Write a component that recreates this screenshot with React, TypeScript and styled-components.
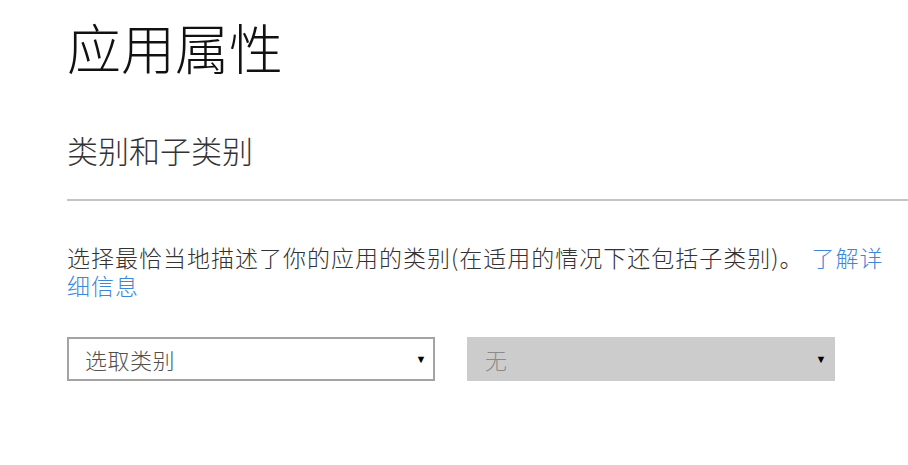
import React from 'react';
import styled, { createGlobalStyle } from 'styled-components';

const GlobalStyle = createGlobalStyle`
  html, body {
    margin: 0;
    padding: 0;
    background: #ffffff;
    overflow: hidden;
  }
  body {
    font-family: "Noto Sans CJK SC", "Liberation Sans", sans-serif;
    color: #333333;
  }
`;

const Page = styled.main`
  padding: 15px 0 0 67px;
  width: 841px;
`;

const Title = styled.h1`
  margin: 0;
  font-size: 54px;
  font-weight: 300;
  line-height: 64px;
  color: #111111;
`;

const SectionTitle = styled.h2`
  margin: 51px 0 0;
  font-size: 31px;
  font-weight: 300;
  line-height: 40px;
  color: #333333;
  padding-bottom: 29px;
  border-bottom: 2px solid #c4c4c4;
`;

const Description = styled.p`
  margin: 42px 0 0;
  width: 826px;
  font-size: 23px;
  letter-spacing: 1px;
  font-weight: 300;
  line-height: 28px;
  color: #333333;
`;

const Link = styled.a`
  color: #3f86d9;
  text-decoration: none;
  margin-left: 8px;
`;

const SelectRow = styled.div`
  display: flex;
  gap: 32px;
  margin-top: 38px;
`;

const SelectBox = styled.div<{ $disabled?: boolean }>`
  box-sizing: border-box;
  width: 368px;
  height: 44px;
  display: flex;
  align-items: center;
  justify-content: space-between;
  padding: 0 6px 0 16px;
  font-size: 22px;
  letter-spacing: 0.5px;
  font-weight: 300;
  color: ${(p) => (p.$disabled ? '#8a8a8a' : '#505050')};
  background: ${(p) => (p.$disabled ? '#cccccc' : '#ffffff')};
  border: 2px solid ${(p) => (p.$disabled ? '#cccccc' : '#a3a3a3')};
`;

const Caret = styled.span`
  font-size: 11px;
  color: #000000;
  font-family: "DejaVu Sans", sans-serif;
`;

export default function App() {
  return (
    <>
      <GlobalStyle />
      <Page>
        <Title>应用属性</Title>
        <SectionTitle>类别和子类别</SectionTitle>
        <Description>
          选择最恰当地描述了你的应用的类别(在适用的情况下还包括子类别)。
          <Link href="#">了解详细信息</Link>
        </Description>
        <SelectRow>
          <SelectBox>
            <span>选取类别</span>
            <Caret>▼</Caret>
          </SelectBox>
          <SelectBox $disabled>
            <span>无</span>
            <Caret>▼</Caret>
          </SelectBox>
        </SelectRow>
      </Page>
    </>
  );
}
